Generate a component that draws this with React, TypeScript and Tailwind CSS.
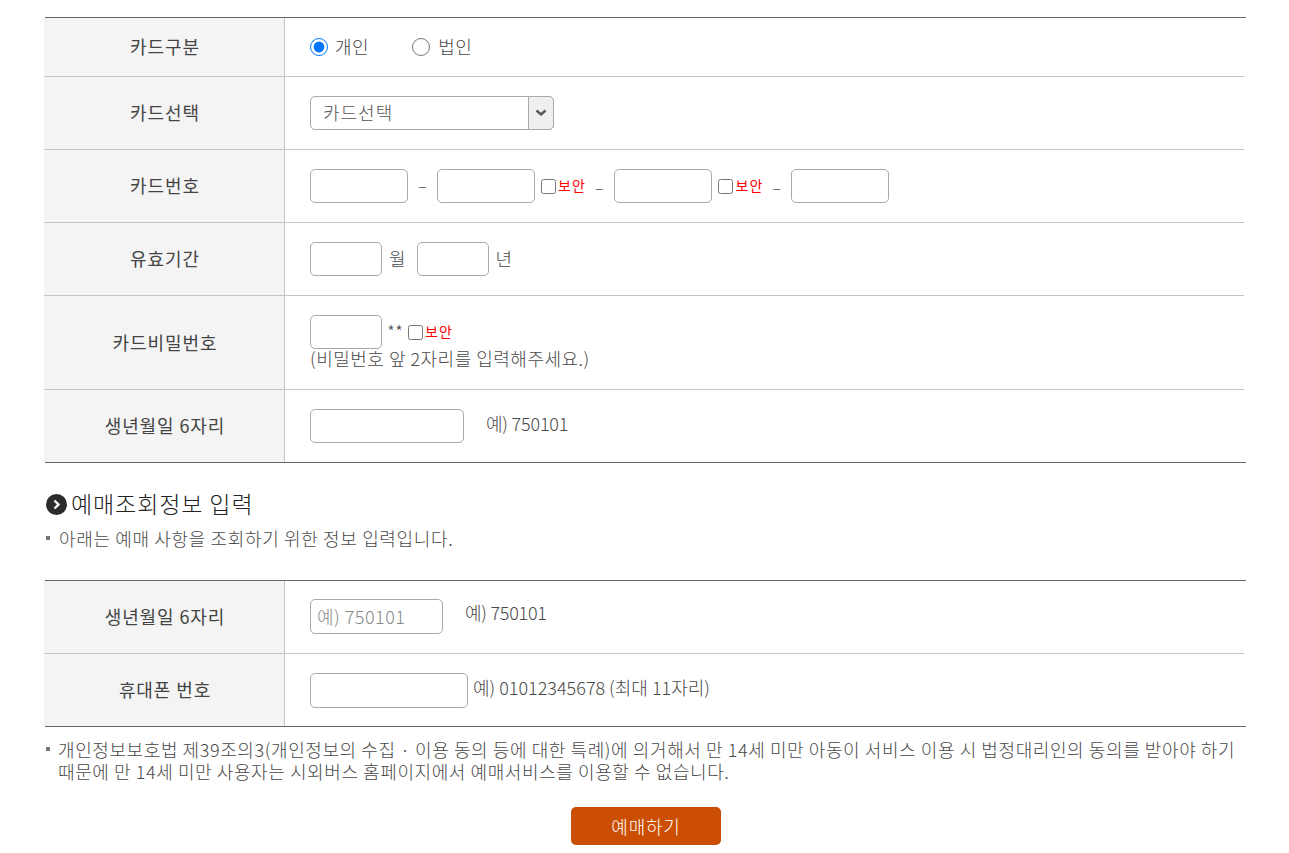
import { ReactNode } from "react";

const inputCls = "rounded-[5px] border border-[#a9a9a9] bg-white outline-none text-[18px] text-[#666] px-1.5 placeholder:text-[#888]";

function Row({ label, height, children }: { label: string; height: string; children: ReactNode }) {
    return (
        <div className={`flex border-b border-[#c4c4c4] last:border-b-0 ${height}`}>
            <div className="w-[241px] shrink-0 bg-[#f4f4f4] border-r border-[#c4c4c4] flex items-center justify-center pb-[2px] pl-[2px] text-[#444] font-normal tracking-[0.9px]">
                {label}
            </div>
            <div className="flex-1 pl-[25px]">{children}</div>
        </div>
    );
}

function Secure() {
    return (
        <label className="flex items-center">
            <input type="checkbox" className="w-[15px] h-[15px] m-0 accent-[#0075ff]" />
            <span className="ml-[2px] pb-[3px] text-[#ff0000] text-[14px] font-normal tracking-[1.1px]">보안</span>
        </label>
    );
}

function Dash() {
    return <span className="w-[9px] text-center text-[16px] pb-[2px]">–</span>;
}

function Table({ children }: { children: ReactNode }) {
    return (
        <div className="ml-[45px] w-[1201px] border-y border-[#666]">
            <div className="-ml-px w-[1200px]">{children}</div>
        </div>
    );
}

export default function App() {
    return (
        <div className="h-[853px] overflow-hidden bg-white pt-[17px] text-[18px] leading-[24px] font-light text-[#484848] font-['Noto_Sans_CJK_KR','Noto_Sans',sans-serif]">
            <Table>
                <Row label="카드구분" height="h-[59px]">
                    <div className="flex items-center h-full">
                        <label className="flex items-center">
                            <input type="radio" name="cardType" defaultChecked className="w-[18px] h-[18px] m-0 accent-[#0075ff]" />
                            <span className="ml-[7px] pb-[2px] tracking-[0.5px]">개인</span>
                        </label>
                        <label className="flex items-center ml-[43px]">
                            <input type="radio" name="cardType" className="w-[18px] h-[18px] m-0" />
                            <span className="ml-[8px] pb-[2px] tracking-[0.5px]">법인</span>
                        </label>
                    </div>
                </Row>
                <Row label="카드선택" height="h-[73px]">
                    <div className="flex items-center h-full">
                        <div className="relative w-[244px] h-[34px]">
                            <select className="appearance-none w-full h-full rounded-[5px] border border-[#a9a9a9] bg-white pl-3 pb-[2px] text-[18px] tracking-[1px] text-[#555] outline-none">
                                <option>카드선택</option>
                            </select>
                            <div className="absolute right-0 top-0 w-[26px] h-[34px] rounded-r-[5px] border border-[#a9a9a9] bg-[#efefef] flex items-center justify-center">
                                <svg width="12" height="8" viewBox="0 0 12 8" fill="none">
                                    <path d="M1.5 1.5L6 5.5l4.5-4" stroke="#555" strokeWidth="2.4" />
                                </svg>
                            </div>
                        </div>
                    </div>
                </Row>
                <Row label="카드번호" height="h-[73px]">
                    <div className="flex items-center h-full">
                        <input className={`${inputCls} h-[34px] w-[98px]`} />
                        <div className="w-[29px] flex justify-center"><Dash /></div>
                        <input className={`${inputCls} h-[34px] w-[98px]`} />
                        <div className="ml-[6px]"><Secure /></div>
                        <div className="ml-[9px]"><Dash /></div>
                        <input className={`${inputCls} h-[34px] w-[98px] ml-[11px]`} />
                        <div className="ml-[6px]"><Secure /></div>
                        <div className="ml-[9px]"><Dash /></div>
                        <input className={`${inputCls} h-[34px] w-[98px] ml-[10px]`} />
                    </div>
                </Row>
                <Row label="유효기간" height="h-[73px]">
                    <div className="flex items-center h-full">
                        <input className={`${inputCls} h-[34px] w-[72px]`} />
                        <span className="ml-[7px] pb-[2px]">월</span>
                        <input className={`${inputCls} h-[34px] w-[72px] ml-[11px]`} />
                        <span className="ml-[7px] pb-[2px]">년</span>
                    </div>
                </Row>
                <Row label="카드비밀번호" height="h-[94px]">
                    <div className="pt-[19px]">
                        <div className="flex items-center">
                            <input className={`${inputCls} h-[34px] w-[72px]`} />
                            <span className="ml-[5px] w-[16px] text-[18px] pb-[2px]">**</span>
                            <div className="ml-[5px]"><Secure /></div>
                        </div>
                        <p className="mt-[-3px] tracking-[0.5px]">(비밀번호 앞 2자리를 입력해주세요.)</p>
                    </div>
                </Row>
                <Row label="생년월일 6자리" height="h-[72px]">
                    <div className="flex items-center h-full">
                        <input className={`${inputCls} h-[34px] w-[154px]`} />
                        <span className="ml-[22px] pb-[7px] tracking-[-0.2px]">예) 750101</span>
                    </div>
                </Row>
            </Table>

            <h2 className="ml-[46px] mt-[26px] flex items-center text-[23px] leading-[28px] tracking-[0.9px] text-[#222]">
                <svg width="21" height="21" viewBox="0 0 21 21" className="shrink-0">
                    <circle cx="10.5" cy="10.5" r="10.5" fill="#2b2b2b" />
                    <path d="M8.5 6.5l4 4-4 4" stroke="#fff" strokeWidth="2.4" fill="none" />
                </svg>
                <span className="ml-[4px] pb-[2px]">예매조회정보 입력</span>
            </h2>
            <p className="ml-[46px] mt-[7px] flex items-center">
                <span className="w-[4px] h-[4px] bg-[#777]" />
                <span className="ml-[9px] tracking-[0.65px]">아래는 예매 사항을 조회하기 위한 정보 입력입니다.</span>
            </p>

            <div className="mt-[30px]">
                <Table>
                    <Row label="생년월일 6자리" height="h-[73px]">
                        <div className="flex items-center h-full pb-px">
                            <input className={`${inputCls} h-[35px] w-[133px] pb-px tracking-[0.5px]`} placeholder="예) 750101" />
                            <span className="ml-[22px] pb-[9px] tracking-[-0.25px]">예) 750101</span>
                        </div>
                    </Row>
                    <Row label="휴대폰 번호" height="h-[72px]">
                        <div className="flex items-center h-full">
                            <input className={`${inputCls} h-[35px] w-[158px]`} />
                            <span className="ml-[5px] pb-[7px]">예) 01012345678 (최대 11자리)</span>
                        </div>
                    </Row>
                </Table>
            </div>

            <div className="ml-[46px] mt-[11px] w-[1200px] flex">
                <span className="mt-[9px] w-[4px] h-[4px] shrink-0 bg-[#777]" />
                <p className="ml-[8px] leading-[22px] tracking-[0.59px]">
                    개인정보보호법 제39조의3(개인정보의 수집 · 이용 동의 등에 대한 특례)에 의거해서 만 14세 미만 아동이 서비스 이용 시 법정대리인의 동의를 받아야 하기 때문에 만 14세 미만 사용자는 시외버스 홈페이지에서 예매서비스를 이용할 수 없습니다.
                </p>
            </div>

            <div className="mt-[25px] flex justify-center pl-[3px]">
                <button className="w-[150px] h-[38px] rounded-[5px] bg-[#cb4e03] text-white tracking-[0.8px]">예매하기</button>
            </div>
        </div>
    );
}
